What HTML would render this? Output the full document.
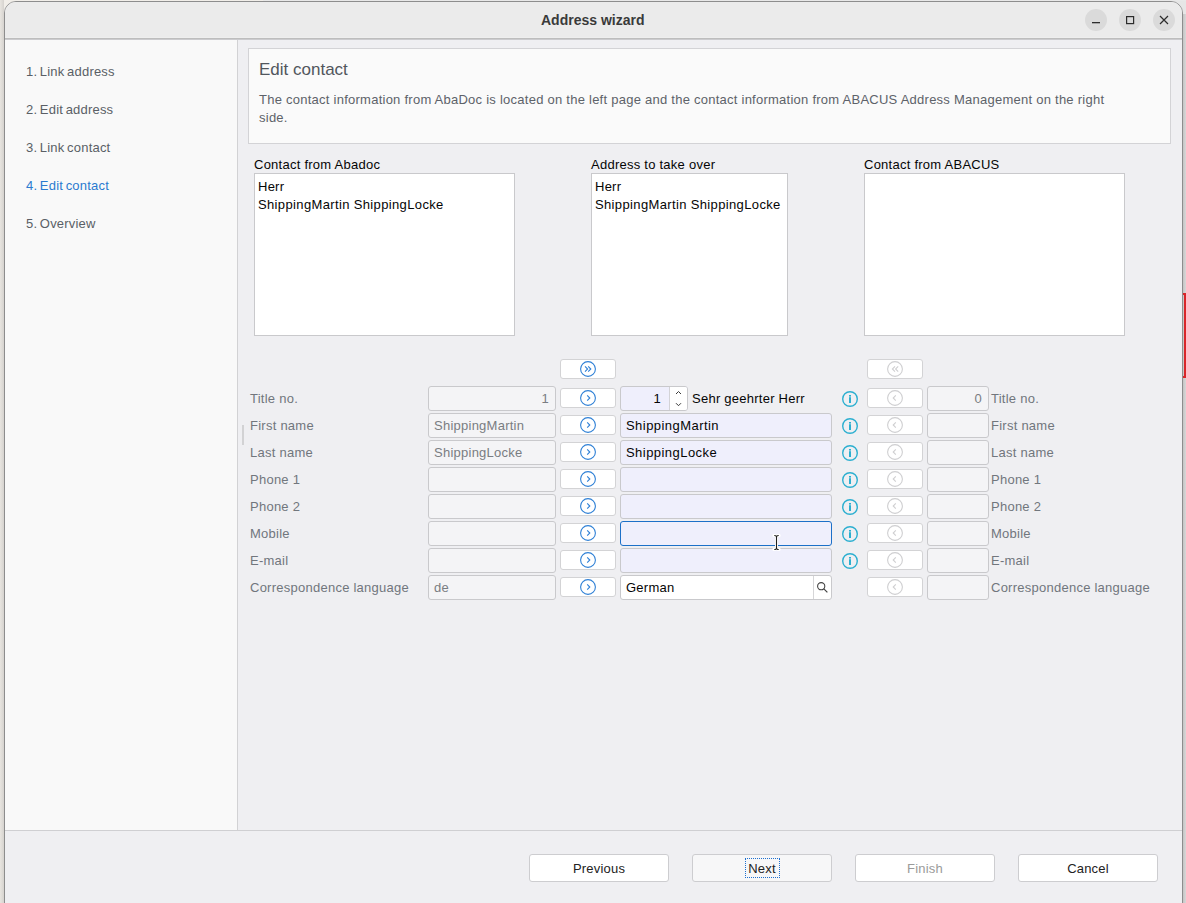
<!DOCTYPE html>
<html><head><meta charset="utf-8">
<style>
*{box-sizing:border-box;margin:0;padding:0}
html,body{width:1186px;height:903px;overflow:hidden;background:#e6e6e6;font-family:"Liberation Sans",sans-serif;font-size:13px}
.a{position:absolute}
.t{position:absolute;white-space:nowrap;line-height:13px;font-size:13px;letter-spacing:0.25px}
.ns{letter-spacing:0}
.sb{letter-spacing:0.2px;word-spacing:-1.2px}
#win{position:absolute;left:4px;top:1px;width:1179px;height:950px;border:1px solid #8d8d8d;border-radius:12px 12px 0 0;background:#efeff2}
#titlebar{position:absolute;left:5px;top:2px;width:1177px;height:38px;background:#ebebeb;border-bottom:2px solid #cbcbce;border-radius:11px 11px 0 0}
#side{position:absolute;left:5px;top:40px;width:233px;height:790px;background:#f9f9f9;border-right:1px solid #d2d2d4}
.fld{position:absolute;height:25px;border:1px solid #c9c9cc;border-radius:3px;background:#f4f4f6}
.ed{background:#efeffc}
.btn{position:absolute;width:56px;height:20px;border:1px solid #d3d3d5;border-radius:3px;background:#fff}
.lbl{color:#71767d}
.ro{color:#7a7d82}
.blk{color:#050505}
.pb{position:absolute;top:854px;width:140px;height:28px;border:1px solid #cdcdd0;border-radius:3px;background:#fff;text-align:center;line-height:28px;font-size:13px;color:#222;letter-spacing:0.2px}

</style></head><body>
<div class="a" style="left:1183px;top:14px;width:3px;height:889px;background:linear-gradient(90deg,#c4c4c4,#d8d8d8)"></div>
<div class="a" style="left:0;top:0;width:4px;height:903px;background:linear-gradient(90deg,#e8e5e0,#d6d3cf)"></div>
<div class="a" style="left:4px;top:0;width:259px;height:20px;background:#f1eee9"></div><div class="a" style="left:263px;top:0;width:923px;height:1px;background:#e8e8e8"></div>
<div class="a" style="left:1184px;top:293px;width:2px;height:85px;background:#d8262a"></div><div class="a" style="left:1183px;top:293px;width:2px;height:2px;background:#d8262a"></div><div class="a" style="left:1183px;top:376px;width:2px;height:2px;background:#d8262a"></div>
<div id="win"></div>
<div id="titlebar"></div><div class="a" style="left:5px;top:38px;width:1177px;height:1px;background:#bdbdbd"></div><div class="a" style="left:5px;top:37px;width:1177px;height:1px;background:#eeeeee"></div>
<div class="t ns" style="left:541px;top:13px;font-size:14px;line-height:14px;font-weight:bold;color:#3a3a3a">Address wizard</div>
<svg class="a" style="left:1085px;top:9px" width="22" height="22"><circle cx="11" cy="11" r="11" fill="#dadada"/><rect x="7" y="13" width="8" height="1.3" fill="#2c2c2c"/></svg><svg class="a" style="left:1119px;top:9px" width="22" height="22"><circle cx="11" cy="11" r="11" fill="#dadada"/><rect x="7.6" y="7.6" width="7" height="7" fill="none" stroke="#2c2c2c" stroke-width="1.2"/></svg><svg class="a" style="left:1153px;top:9px" width="22" height="22"><circle cx="11" cy="11" r="11" fill="#dadada"/><path d="M7 7L15 15M15 7L7 15" stroke="#2c2c2c" stroke-width="1.2"/></svg>
<div id="side"></div>
<div class="t sb" style="left:26px;top:65px;color:#5a5f66">1. Link address</div>
<div class="t sb" style="left:26px;top:103px;color:#5a5f66">2. Edit address</div>
<div class="t sb" style="left:26px;top:141px;color:#5a5f66">3. Link contact</div>
<div class="t sb" style="left:26px;top:179px;color:#2b7bd0">4. Edit contact</div>
<div class="t sb" style="left:26px;top:217px;color:#5a5f66">5. Overview</div>
<div class="a" style="left:5px;top:830px;width:1177px;height:1px;background:#cfcfd2"></div>
<div class="a" style="left:248px;top:48px;width:923px;height:96px;border:1px solid #d3d3d6;background:#fafafa"></div>
<div class="t ns" style="left:259px;top:61px;font-size:17px;line-height:17px;color:#51565d">Edit contact</div>
<div class="t" style="left:259px;top:93px;color:#5d6269">The contact information from AbaDoc is located on the left page and the contact information from ABACUS Address Management on the right</div>
<div class="t" style="left:259px;top:111px;color:#5d6269">side.</div>
<div class="t blk" style="left:254px;top:158px">Contact from Abadoc</div>
<div class="a" style="left:254px;top:173px;width:261px;height:163px;border:1px solid #c9c9cc;background:#fff"></div>
<div class="t blk" style="left:591px;top:158px">Address to take over</div>
<div class="a" style="left:591px;top:173px;width:197px;height:163px;border:1px solid #c9c9cc;background:#fff"></div>
<div class="t blk" style="left:864px;top:158px">Contact from ABACUS</div>
<div class="a" style="left:864px;top:173px;width:261px;height:163px;border:1px solid #c9c9cc;background:#fff"></div>
<div class="t blk" style="left:258px;top:180px">Herr</div>
<div class="t blk" style="left:258px;top:198px;letter-spacing:0.36px">ShippingMartin ShippingLocke</div>
<div class="t blk" style="left:595px;top:180px">Herr</div>
<div class="t blk" style="left:595px;top:198px;letter-spacing:0.36px">ShippingMartin ShippingLocke</div>
<div class="btn" style="left:560px;top:359px"></div><svg class="a" style="left:580px;top:361px" width="16" height="16"><circle cx="8" cy="8" r="7.4" fill="none" stroke="#2f80d6" stroke-width="1.1"/><path d="M5 5.4L7.6 8L5 10.6M8.2 5.4L10.8 8L8.2 10.6" fill="none" stroke="#2f80d6" stroke-width="1.1"/></svg>
<div class="btn" style="left:867px;top:359px"></div><svg class="a" style="left:887px;top:361px" width="16" height="16"><circle cx="8" cy="8" r="7.4" fill="none" stroke="#cfcfd1" stroke-width="1.1"/><path d="M8 5.4L5.4 8L8 10.6M11.2 5.4L8.6 8L11.2 10.6" fill="none" stroke="#cfcfd1" stroke-width="1.1"/></svg>
<div class="t lbl" style="left:250px;top:392px">Title no.</div>
<div class="fld" style="left:428px;top:386px;width:128px"></div>
<div class="t ro" style="left:428px;width:121px;text-align:right;top:392px">1</div>
<div class="btn" style="left:560px;top:388px"></div><svg class="a" style="left:580px;top:390px" width="16" height="16"><circle cx="8" cy="8" r="7.4" fill="none" stroke="#2f80d6" stroke-width="1.1"/><path d="M7.2 5.3L9.8 8L7.2 10.7" fill="none" stroke="#2f80d6" stroke-width="1.1"/></svg>
<div class="fld ed" style="left:620px;top:386px;width:68px"></div>
<div class="a" style="left:669px;top:387px;width:18px;height:23px;background:#fff;border-left:1px solid #d3d3d6;border-radius:0 2px 2px 0"></div>
<svg class="a" style="left:670px;top:386px" width="16" height="25"><path d="M6 8L8.5 5.5L11 8M6 17.2L8.5 19.7L11 17.2" fill="none" stroke="#3a3a3a" stroke-width="1"/></svg>
<div class="t blk" style="left:620px;width:41px;text-align:right;top:392px">1</div>
<div class="t blk" style="left:692px;top:392px">Sehr geehrter Herr</div>
<svg class="a" style="left:842px;top:391px" width="16" height="16"><circle cx="8" cy="8" r="7.3" fill="none" stroke="#2cafd0" stroke-width="1.4"/><rect x="7" y="6.2" width="2" height="5.8" fill="#2cafd0"/><rect x="7" y="4" width="2" height="1.6" fill="#2cafd0"/></svg>
<div class="btn" style="left:867px;top:388px"></div><svg class="a" style="left:887px;top:390px" width="16" height="16"><circle cx="8" cy="8" r="7.4" fill="none" stroke="#cfcfd1" stroke-width="1.1"/><path d="M8.8 5.3L6.2 8L8.8 10.7" fill="none" stroke="#cfcfd1" stroke-width="1.1"/></svg>
<div class="fld" style="left:927px;top:386px;width:62px"></div>
<div class="t ro" style="left:927px;width:55px;text-align:right;top:392px">0</div>
<div class="t lbl" style="left:991px;top:392px">Title no.</div>
<div class="t lbl" style="left:250px;top:419px">First name</div>
<div class="fld" style="left:428px;top:413px;width:128px"></div>
<div class="t ro" style="left:434px;top:419px">ShippingMartin</div>
<div class="btn" style="left:560px;top:415px"></div><svg class="a" style="left:580px;top:417px" width="16" height="16"><circle cx="8" cy="8" r="7.4" fill="none" stroke="#2f80d6" stroke-width="1.1"/><path d="M7.2 5.3L9.8 8L7.2 10.7" fill="none" stroke="#2f80d6" stroke-width="1.1"/></svg>
<div class="fld ed" style="left:620px;top:413px;width:212px"></div>
<div class="t blk" style="left:626px;top:419px;letter-spacing:0.45px">ShippingMartin</div>
<svg class="a" style="left:842px;top:418px" width="16" height="16"><circle cx="8" cy="8" r="7.3" fill="none" stroke="#2cafd0" stroke-width="1.4"/><rect x="7" y="6.2" width="2" height="5.8" fill="#2cafd0"/><rect x="7" y="4" width="2" height="1.6" fill="#2cafd0"/></svg>
<div class="btn" style="left:867px;top:415px"></div><svg class="a" style="left:887px;top:417px" width="16" height="16"><circle cx="8" cy="8" r="7.4" fill="none" stroke="#cfcfd1" stroke-width="1.1"/><path d="M8.8 5.3L6.2 8L8.8 10.7" fill="none" stroke="#cfcfd1" stroke-width="1.1"/></svg>
<div class="fld" style="left:927px;top:413px;width:62px"></div>
<div class="t lbl" style="left:991px;top:419px">First name</div>
<div class="t lbl" style="left:250px;top:446px">Last name</div>
<div class="fld" style="left:428px;top:440px;width:128px"></div>
<div class="t ro" style="left:434px;top:446px">ShippingLocke</div>
<div class="btn" style="left:560px;top:442px"></div><svg class="a" style="left:580px;top:444px" width="16" height="16"><circle cx="8" cy="8" r="7.4" fill="none" stroke="#2f80d6" stroke-width="1.1"/><path d="M7.2 5.3L9.8 8L7.2 10.7" fill="none" stroke="#2f80d6" stroke-width="1.1"/></svg>
<div class="fld ed" style="left:620px;top:440px;width:212px"></div>
<div class="t blk" style="left:626px;top:446px;letter-spacing:0.45px">ShippingLocke</div>
<svg class="a" style="left:842px;top:445px" width="16" height="16"><circle cx="8" cy="8" r="7.3" fill="none" stroke="#2cafd0" stroke-width="1.4"/><rect x="7" y="6.2" width="2" height="5.8" fill="#2cafd0"/><rect x="7" y="4" width="2" height="1.6" fill="#2cafd0"/></svg>
<div class="btn" style="left:867px;top:442px"></div><svg class="a" style="left:887px;top:444px" width="16" height="16"><circle cx="8" cy="8" r="7.4" fill="none" stroke="#cfcfd1" stroke-width="1.1"/><path d="M8.8 5.3L6.2 8L8.8 10.7" fill="none" stroke="#cfcfd1" stroke-width="1.1"/></svg>
<div class="fld" style="left:927px;top:440px;width:62px"></div>
<div class="t lbl" style="left:991px;top:446px">Last name</div>
<div class="t lbl" style="left:250px;top:473px">Phone 1</div>
<div class="fld" style="left:428px;top:467px;width:128px"></div>
<div class="btn" style="left:560px;top:469px"></div><svg class="a" style="left:580px;top:471px" width="16" height="16"><circle cx="8" cy="8" r="7.4" fill="none" stroke="#2f80d6" stroke-width="1.1"/><path d="M7.2 5.3L9.8 8L7.2 10.7" fill="none" stroke="#2f80d6" stroke-width="1.1"/></svg>
<div class="fld ed" style="left:620px;top:467px;width:212px"></div>
<svg class="a" style="left:842px;top:472px" width="16" height="16"><circle cx="8" cy="8" r="7.3" fill="none" stroke="#2cafd0" stroke-width="1.4"/><rect x="7" y="6.2" width="2" height="5.8" fill="#2cafd0"/><rect x="7" y="4" width="2" height="1.6" fill="#2cafd0"/></svg>
<div class="btn" style="left:867px;top:469px"></div><svg class="a" style="left:887px;top:471px" width="16" height="16"><circle cx="8" cy="8" r="7.4" fill="none" stroke="#cfcfd1" stroke-width="1.1"/><path d="M8.8 5.3L6.2 8L8.8 10.7" fill="none" stroke="#cfcfd1" stroke-width="1.1"/></svg>
<div class="fld" style="left:927px;top:467px;width:62px"></div>
<div class="t lbl" style="left:991px;top:473px">Phone 1</div>
<div class="t lbl" style="left:250px;top:500px">Phone 2</div>
<div class="fld" style="left:428px;top:494px;width:128px"></div>
<div class="btn" style="left:560px;top:496px"></div><svg class="a" style="left:580px;top:498px" width="16" height="16"><circle cx="8" cy="8" r="7.4" fill="none" stroke="#2f80d6" stroke-width="1.1"/><path d="M7.2 5.3L9.8 8L7.2 10.7" fill="none" stroke="#2f80d6" stroke-width="1.1"/></svg>
<div class="fld ed" style="left:620px;top:494px;width:212px"></div>
<svg class="a" style="left:842px;top:499px" width="16" height="16"><circle cx="8" cy="8" r="7.3" fill="none" stroke="#2cafd0" stroke-width="1.4"/><rect x="7" y="6.2" width="2" height="5.8" fill="#2cafd0"/><rect x="7" y="4" width="2" height="1.6" fill="#2cafd0"/></svg>
<div class="btn" style="left:867px;top:496px"></div><svg class="a" style="left:887px;top:498px" width="16" height="16"><circle cx="8" cy="8" r="7.4" fill="none" stroke="#cfcfd1" stroke-width="1.1"/><path d="M8.8 5.3L6.2 8L8.8 10.7" fill="none" stroke="#cfcfd1" stroke-width="1.1"/></svg>
<div class="fld" style="left:927px;top:494px;width:62px"></div>
<div class="t lbl" style="left:991px;top:500px">Phone 2</div>
<div class="t lbl" style="left:250px;top:527px">Mobile</div>
<div class="fld" style="left:428px;top:521px;width:128px"></div>
<div class="btn" style="left:560px;top:523px"></div><svg class="a" style="left:580px;top:525px" width="16" height="16"><circle cx="8" cy="8" r="7.4" fill="none" stroke="#2f80d6" stroke-width="1.1"/><path d="M7.2 5.3L9.8 8L7.2 10.7" fill="none" stroke="#2f80d6" stroke-width="1.1"/></svg>
<div class="fld ed" style="left:620px;top:521px;width:212px;border-color:#1c70c8"></div>
<svg class="a" style="left:842px;top:526px" width="16" height="16"><circle cx="8" cy="8" r="7.3" fill="none" stroke="#2cafd0" stroke-width="1.4"/><rect x="7" y="6.2" width="2" height="5.8" fill="#2cafd0"/><rect x="7" y="4" width="2" height="1.6" fill="#2cafd0"/></svg>
<div class="btn" style="left:867px;top:523px"></div><svg class="a" style="left:887px;top:525px" width="16" height="16"><circle cx="8" cy="8" r="7.4" fill="none" stroke="#cfcfd1" stroke-width="1.1"/><path d="M8.8 5.3L6.2 8L8.8 10.7" fill="none" stroke="#cfcfd1" stroke-width="1.1"/></svg>
<div class="fld" style="left:927px;top:521px;width:62px"></div>
<div class="t lbl" style="left:991px;top:527px">Mobile</div>
<div class="t lbl" style="left:250px;top:554px">E-mail</div>
<div class="fld" style="left:428px;top:548px;width:128px"></div>
<div class="btn" style="left:560px;top:550px"></div><svg class="a" style="left:580px;top:552px" width="16" height="16"><circle cx="8" cy="8" r="7.4" fill="none" stroke="#2f80d6" stroke-width="1.1"/><path d="M7.2 5.3L9.8 8L7.2 10.7" fill="none" stroke="#2f80d6" stroke-width="1.1"/></svg>
<div class="fld ed" style="left:620px;top:548px;width:212px"></div>
<svg class="a" style="left:842px;top:553px" width="16" height="16"><circle cx="8" cy="8" r="7.3" fill="none" stroke="#2cafd0" stroke-width="1.4"/><rect x="7" y="6.2" width="2" height="5.8" fill="#2cafd0"/><rect x="7" y="4" width="2" height="1.6" fill="#2cafd0"/></svg>
<div class="btn" style="left:867px;top:550px"></div><svg class="a" style="left:887px;top:552px" width="16" height="16"><circle cx="8" cy="8" r="7.4" fill="none" stroke="#cfcfd1" stroke-width="1.1"/><path d="M8.8 5.3L6.2 8L8.8 10.7" fill="none" stroke="#cfcfd1" stroke-width="1.1"/></svg>
<div class="fld" style="left:927px;top:548px;width:62px"></div>
<div class="t lbl" style="left:991px;top:554px">E-mail</div>
<div class="t lbl" style="left:250px;top:581px">Correspondence language</div>
<div class="fld" style="left:428px;top:575px;width:128px"></div>
<div class="t ro" style="left:434px;top:581px">de</div>
<div class="btn" style="left:560px;top:577px"></div><svg class="a" style="left:580px;top:579px" width="16" height="16"><circle cx="8" cy="8" r="7.4" fill="none" stroke="#2f80d6" stroke-width="1.1"/><path d="M7.2 5.3L9.8 8L7.2 10.7" fill="none" stroke="#2f80d6" stroke-width="1.1"/></svg>
<div class="fld" style="left:620px;top:575px;width:212px;background:#fff"></div>
<div class="a" style="left:813px;top:576px;width:1px;height:23px;background:#d6d6d8"></div>
<svg class="a" style="left:815px;top:580px" width="14" height="14"><circle cx="6.2" cy="6.2" r="3.6" fill="none" stroke="#444" stroke-width="1.1"/><path d="M8.6 8.6L12.4 12.4" stroke="#444" stroke-width="1.2"/></svg>
<div class="t blk" style="left:626px;top:581px">German</div>
<div class="btn" style="left:867px;top:577px"></div><svg class="a" style="left:887px;top:579px" width="16" height="16"><circle cx="8" cy="8" r="7.4" fill="none" stroke="#cfcfd1" stroke-width="1.1"/><path d="M8.8 5.3L6.2 8L8.8 10.7" fill="none" stroke="#cfcfd1" stroke-width="1.1"/></svg>
<div class="fld" style="left:927px;top:575px;width:62px"></div>
<div class="t lbl" style="left:991px;top:581px">Correspondence language</div>
<svg class="a" style="left:771px;top:533px" width="11" height="19"><path d="M2.8 2.5Q5.5 2.2 5.5 4.5V14.5Q5.5 16.8 2.8 16.5M8.2 2.5Q5.5 2.2 5.5 4.5V14.5Q5.5 16.8 8.2 16.5" fill="none" stroke="#fff" stroke-width="3" stroke-linecap="round"/><path d="M3.3 2.5Q5.5 2.4 5.5 4.5V14.5Q5.5 16.6 3.3 16.5M7.7 2.5Q5.5 2.4 5.5 4.5V14.5Q5.5 16.6 7.7 16.5" fill="none" stroke="#1e1e1e" stroke-width="1.1"/></svg>
<div class="a" style="left:242px;top:425px;width:2px;height:20px;background:#d2d2d4"></div>
<div class="pb" style="left:529px">Previous</div>
<div class="pb" style="left:692px;background:#f7f7f8">Next</div><div class="a" style="left:745px;top:858px;width:35px;height:20px;border:1px dotted #1f70cf"></div>
<div class="pb" style="left:855px;color:#9a9a9a">Finish</div>
<div class="pb" style="left:1018px">Cancel</div>
</body></html>
